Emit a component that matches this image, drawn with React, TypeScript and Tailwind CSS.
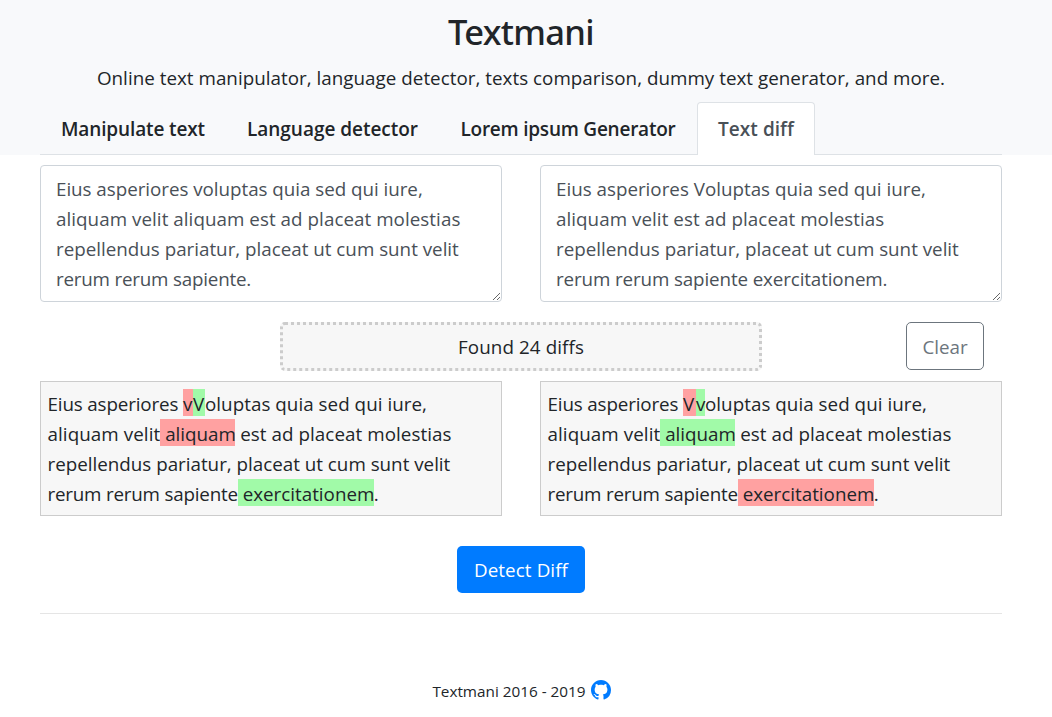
import type { ReactNode } from "react";

const tabs = [
  { label: "Manipulate text", active: false, cls: "w-[186px] tracking-[-0.13px]" },
  { label: "Language detector", active: false, cls: "w-[213px] tracking-[-0.03px]" },
  { label: "Lorem ipsum Generator", active: false, cls: "w-[258px] tracking-[-0.23px]" },
  { label: "Text diff", active: true, cls: "w-[118px] tracking-[0.05px]" },
];

function Del({ children, className = "" }: { children: ReactNode; className?: string }) {
  return (
    <del className={"inline-block bg-[#ffa1a1] pt-[4px] leading-[23px] no-underline " + className}>{children}</del>
  );
}

function Ins({ children, className = "" }: { children: ReactNode; className?: string }) {
  return (
    <ins className={"inline-block bg-[#a1faa8] pt-[4px] leading-[23px] no-underline " + className}>{children}</ins>
  );
}

function Source({ children }: { children: ReactNode }) {
  return (
    <div
      role="textbox"
      contentEditable
      suppressContentEditableWarning
      spellCheck={false}
      className="h-[137px] w-[462px] resize overflow-hidden rounded-[4px] border border-[#ced4da] bg-white px-[15px] py-[7.5px] leading-[30px] whitespace-pre text-[#495057] outline-none"
    >
      {children}
    </div>
  );
}

function Result({ first, second, last }: { first: ReactNode; second: ReactNode; last: ReactNode }) {
  return (
    <div className="h-[135px] w-[462px] border border-[#ccc] bg-[#f7f7f7] px-[6.5px] pt-[7px] leading-[30px] whitespace-pre">
      <div className="h-[30px]">{first}</div>
      <div className="h-[30px]">{second}</div>
      <div className="h-[30px]">repellendus pariatur, placeat ut cum sunt velit</div>
      <div className="h-[30px]">{last}</div>
    </div>
  );
}

function GithubMark() {
  return (
    <svg viewBox="0 0 16 16" className="size-[20px] fill-[#007bff]">
      <path d="M8 0C3.58 0 0 3.58 0 8c0 3.54 2.29 6.53 5.47 7.59.4.07.55-.17.55-.38 0-.19-.01-.82-.01-1.49-2.01.37-2.53-.49-2.69-.94-.09-.23-.48-.94-.82-1.13-.28-.15-.68-.52-.01-.53.63-.01 1.08.58 1.23.82.72 1.21 1.87.87 2.33.66.07-.52.28-.87.51-1.07-1.78-.2-3.64-.89-3.64-3.95 0-.87.31-1.59.82-2.15-.08-.2-.36-1.02.08-2.12 0 0 .67-.21 2.2.82.64-.18 1.32-.27 2-.27s1.36.09 2 .27c1.53-1.04 2.2-.82 2.2-.82.44 1.1.16 1.92.08 2.12.51.56.82 1.27.82 2.15 0 3.07-1.87 3.75-3.65 3.95.29.25.54.73.54 1.48 0 1.07-.01 1.93-.01 2.2 0 .21.15.46.55.38A8.01 8.01 0 0 0 16 8c0-4.42-3.58-8-8-8z" />
    </svg>
  );
}

export default function App() {
  return (
    <div className="min-h-[717px] w-[1052px] bg-white font-['Open_Sans','Segoe_UI',sans-serif] text-[18.8px] text-[#212529]">
      <header className="flex h-[155px] flex-col bg-[#f8f9fb] pr-[50px] pl-[40px]">
        <h1 className="mt-[10px] text-center font-['Noto_Sans',sans-serif] text-[34.5px] leading-[44px] font-medium tracking-[-0.7px]">
          Textmani
        </h1>
        <p className="mt-[9px] text-center leading-[30px] tracking-[0.03px] whitespace-nowrap">
          Online text manipulator, language detector, texts comparison, dummy text generator, and more.
        </p>
        <nav className="mt-auto flex h-[53px] border-b border-[#dee2e6]">
          {tabs.map((t) => (
            <a
              key={t.label}
              className={
                t.cls +
                " flex h-[53px] shrink-0 items-center justify-center rounded-t-[4px] border border-b-0 pt-px text-[19px] font-semibold whitespace-nowrap " +
                (t.active ? "border-[#dee2e6] bg-white text-[#495057]" : "border-transparent")
              }
            >
              {t.label}
            </a>
          ))}
        </nav>
      </header>

      <main className="mt-[10px] flex flex-col pr-[50px] pl-[40px]">
        <div className="flex justify-between">
          <Source>
            <div className="tracking-[-0.03px]">Eius asperiores voluptas quia sed qui iure,</div>
            <div className="tracking-[0.05px]">aliquam velit aliquam est ad placeat molestias</div>
            <div>repellendus pariatur, placeat ut cum sunt velit</div>
            <div className="tracking-[-0.2px]">rerum rerum sapiente.</div>
          </Source>
          <Source>
            <div>Eius asperiores Voluptas quia sed qui iure,</div>
            <div className="tracking-[0.05px]">aliquam velit est ad placeat molestias</div>
            <div>repellendus pariatur, placeat ut cum sunt velit</div>
            <div className="tracking-[-0.12px]">rerum rerum sapiente exercitationem.</div>
          </Source>
        </div>

        <div className="mt-[20px] flex items-start">
          <div className="ml-[240px] flex h-[49px] w-[482px] items-center justify-center rounded-[5px] border-[3px] border-dotted border-[#ccc] bg-[#f7f7f7] pt-px tracking-[0.1px]">
            Found 24 diffs
          </div>
          <button className="ml-[144px] h-[48px] w-[78px] rounded-[5px] border border-[#6c757d] pt-[2px] text-[#6c757d]">
            Clear
          </button>
        </div>

        <div className="mt-[10px] flex justify-between">
          <Result
            first={
              <>
                <span className="tracking-[-0.14px]">Eius asperiores </span>
                <Del className="w-[10px]">v</Del>
                <Ins className="w-[12px]">V</Ins>
                <span className="tracking-[0.04px]">oluptas quia sed qui iure,</span>
              </>
            }
            second={
              <>
                <span className="tracking-[0.08px]">aliquam velit</span>
                <Del className="w-[75px]"> aliquam</Del>
                <span className="tracking-[0.06px]"> est ad placeat molestias</span>
              </>
            }
            last={
              <>
                <span className="tracking-[-0.2px]">rerum rerum sapiente</span>
                <Ins className="w-[136px]"> exercitationem</Ins>.
              </>
            }
          />
          <Result
            first={
              <>
                <span className="tracking-[-0.14px]">Eius asperiores </span>
                <Del className="w-[13px]">V</Del>
                <Ins className="w-[9px]">v</Ins>
                <span className="tracking-[0.04px]">oluptas quia sed qui iure,</span>
              </>
            }
            second={
              <>
                <span className="tracking-[0.08px]">aliquam velit</span>
                <Ins className="w-[75px]"> aliquam</Ins>
                <span className="tracking-[0.06px]"> est ad placeat molestias</span>
              </>
            }
            last={
              <>
                <span className="tracking-[-0.2px]">rerum rerum sapiente</span>
                <Del className="w-[136px]"> exercitationem</Del>.
              </>
            }
          />
        </div>

        <button className="mt-[30px] h-[47px] w-[128px] self-center rounded-[5px] bg-[#007bff] pt-px tracking-[0.1px] text-white">
          Detect Diff
        </button>
        <hr className="mt-[20px] border-t border-[#e5e5e5]" />
      </main>

      <footer className="mt-[64px] flex h-[24px] items-center justify-center gap-[5px] pr-[9px] text-[15.3px]">
        <span className="pt-[2px]">Textmani 2016 - 2019</span>
        <GithubMark />
      </footer>
    </div>
  );
}
